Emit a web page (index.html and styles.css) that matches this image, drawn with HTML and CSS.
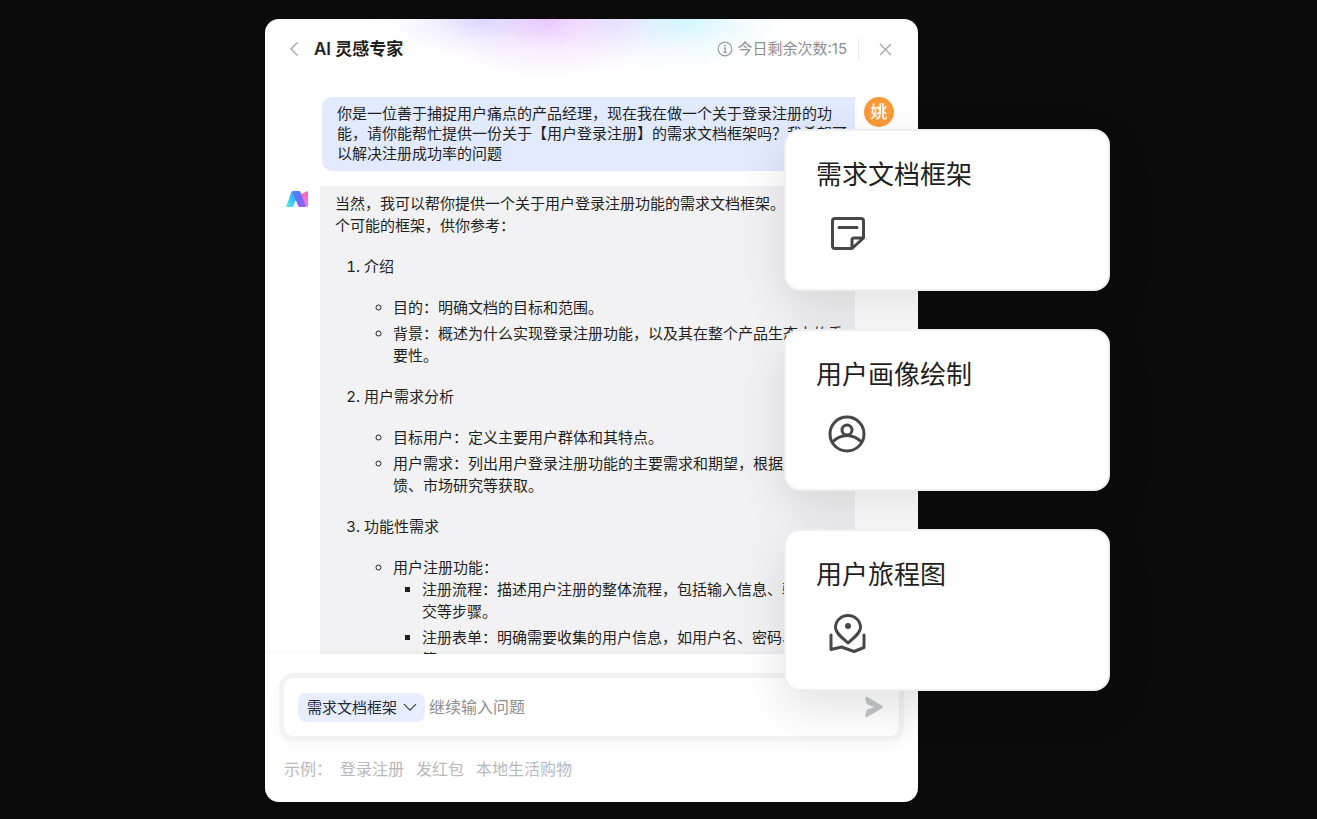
FILE: index.html
```html
<!DOCTYPE html>
<html lang="zh-CN">
	<head>
		<meta charset="utf-8">
		<meta name="viewport" content="width=device-width, initial-scale=1">
		<title>AI 灵感专家</title>
		<link rel="stylesheet" href="styles.css">
	</head>
	<body>
		<!--stage-->
		<div class="stage">
			<!--chat panel-->
			<main class="panel">
				<header class="panel-header">
					<button type="button" class="icon-btn" aria-label="返回">
						<svg width="10" height="16" viewBox="0 0 10 16" fill="none" stroke="#a3a3a8" stroke-width="1.3"><path d="M8.5 1.5L2 8l6.5 6.5"/></svg>
					</button>
					<h1>AI 灵感专家</h1>
					<p class="quota">
						<svg width="16" height="16" viewBox="0 0 16 16" fill="none" stroke="#98989c" stroke-width="1.2"><circle cx="8" cy="8" r="6.8"/><path d="M6.7 7h1.5v4.3M6.4 11.4h3.4"/><circle cx="8" cy="4.7" r=".9" fill="#98989c" stroke="none"/></svg>
						<span>今日剩余次数:15</span>
					</p>
					<button type="button" class="icon-btn close" aria-label="关闭">
						<svg width="13" height="13" viewBox="0 0 13 13" fill="none" stroke="#a3a3a8" stroke-width="1.2"><path d="M1 1l11 11M12 1L1 12"/></svg>
					</button>
				</header>
				<!--messages-->
				<section class="messages">
					<div class="bubble-user">你是一位善于捕捉用户痛点的产品经理，现在我在做一个关于登录注册的功<br>能，请你能帮忙提供一份关于【用户登录注册】的需求文档框架吗？我希望可<br>以解决注册成功率的问题</div>
					<div class="avatar">姚</div>
					<div class="logo">
						<svg width="24" height="18" viewBox="0 0 24 18">
							<defs>
								<linearGradient id="leg" x1="0" y1="1" x2="1" y2="0"><stop offset="0" stop-color="#5ff0e4"/><stop offset=".5" stop-color="#38bdf5"/><stop offset="1" stop-color="#4a83f7"/></linearGradient>
								<linearGradient id="mid" x1="0" y1="0" x2="1" y2="1"><stop offset="0" stop-color="#3f8cf6"/><stop offset=".5" stop-color="#6b6cf2"/><stop offset="1" stop-color="#a65cf0"/></linearGradient>
								<linearGradient id="end" x1="0" y1="0" x2="0" y2="1"><stop offset="0" stop-color="#ff62b2"/><stop offset="1" stop-color="#e27cf5"/></linearGradient>
							</defs>
							<path d="M15.500 3.700L22 1v15.500h-3L14.500 6z" fill="url(#end)"/>
							<path d="M6.500 1h7L7 17H0L5 3q.6-2 1.500-2z" fill="url(#leg)"/>
							<path d="M7.500 1H13q1 0 1.500 1.200L20 17h-6q-1.500 0-2-1.500L7 3z" fill="url(#mid)"/>
						</svg>
					</div>
					<div class="bubble-ai">
						<p>当然，我可以帮你提供一个关于用户登录注册功能的需求文档框架。以下是一<br>个可能的框架，供你参考：</p>
						<ol>
							<li>介绍
								<ul>
									<li>目的：明确文档的目标和范围。</li>
									<li>背景：概述为什么实现登录注册功能，以及其在整个产品生态中的重<br>要性。</li>
								</ul>
							</li>
							<li>用户需求分析
								<ul>
									<li>目标用户：定义主要用户群体和其特点。</li>
									<li>用户需求：列出用户登录注册功能的主要需求和期望，根据用户反<br>馈、市场研究等获取。</li>
								</ul>
							</li>
							<li>功能性需求
								<ul>
									<li>用户注册功能：
										<ul>
											<li>注册流程：描述用户注册的整体流程，包括输入信息、验证、提<br>交等步骤。</li>
											<li>注册表单：明确需要收集的用户信息，如用户名、密码、邮箱<br>等。</li>
										</ul>
									</li>
								</ul>
							</li>
						</ol>
					</div>
				</section>
				<!--/messages-->
				<footer class="panel-footer">
					<form class="ask">
						<div class="picker">
							<select aria-label="模板">
								<option selected>需求文档框架</option>
								<option>用户画像绘制</option>
								<option>用户旅程图</option>
							</select>
							<svg width="14" height="9" viewBox="0 0 14 9" fill="none" stroke="#3c4356" stroke-width="1.2"><path d="M1 1.200l6 6 6-6"/></svg>
						</div>
						<input type="text" placeholder="继续输入问题" aria-label="继续输入问题">
						<button type="submit" class="icon-btn" aria-label="发送">
							<svg width="20" height="22" viewBox="0 0 20 22"><path d="M1.500 1.200Q2.300.500 3.400 1L18 9.800q1.600 1.200 0 2.400L3.400 21q-1.100.500-1.900-.2-.6-.700-.3-1.700L2.600 14.400q.3-.9 1.200-1.200L10.500 11 3.800 8.800Q2.900 8.500 2.600 7.600L1.200 2.900q-.3-1 .3-1.700z" fill="#c5c6ca"/></svg>
						</button>
					</form>
					<nav class="examples">
						<span>示例：</span>
						<a href="#">登录注册</a>
						<a href="#">发红包</a>
						<a href="#">本地生活购物</a>
					</nav>
				</footer>
			</main>
			<!--/chat panel-->
			<!--template cards-->
			<aside class="cards">
				<button type="button" class="card">
					<span>需求文档框架</span>
					<svg width="40" height="40" viewBox="0 0 40 40" fill="none" stroke="#474747" stroke-width="3" stroke-linejoin="round"><path d="M7 4.500h26q2.500 0 2.500 2.500v17L24 34.500H7Q4.500 34.500 4.500 32V7Q4.500 4.500 7 4.500zM24 34.500V26q0-2 2-2h9.500"/><path d="M11 13.500h18" stroke-linecap="round"/></svg>
				</button>
				<button type="button" class="card">
					<span>用户画像绘制</span>
					<svg width="40" height="40" viewBox="0 0 40 40" fill="none" stroke="#474747" stroke-width="3"><circle cx="19" cy="20" r="17"/><circle cx="19" cy="16" r="5"/><path d="M4.500 28Q11 21.500 19 21.500T33.500 28"/></svg>
				</button>
				<button type="button" class="card">
					<span>用户旅程图</span>
					<svg width="40" height="40" viewBox="0 0 40 40" fill="none" stroke="#474747" stroke-width="3" stroke-linejoin="round"><path d="M20 29C14 23.500 7.500 19 7.500 13.500a12.500 12 0 0 1 25 0C32.500 19 26 23.500 20 29z"/><circle cx="20" cy="12" r="3" fill="#474747" stroke="none"/><path d="M3 21V35.500l10.500-2.500L26 37.500l10-4V21" stroke-linecap="round"/></svg>
				</button>
			</aside>
			<!--/template cards-->
		</div>
		<!--/stage-->
	</body>
</html>
```
FILE: styles.css
```css
*{
	box-sizing:border-box;
}
body{
	margin:0;
	background:#0b0b0b;
	color:#1f1f21;
	font-family:Inter, "Noto Sans CJK SC", sans-serif;
	font-size:15px;
}
button, input, select{
	font:inherit;
	border:0;
	background:none;
	padding:0;
	margin:0;
}
button{
	cursor:pointer;
}
svg{
	display:block;
	flex:none;
}
p, h1{
	margin:0;
}
.stage{
	display:flex;
	height:100vh;
	min-height:600px;
	padding:19px 207px 17px 265px;
}
/* chat panel */
.panel{
	flex:1;
	min-width:0;
	display:flex;
	flex-direction:column;
	overflow:hidden;
	border-radius:14px;
	background:
		radial-gradient(90px 36px at 33% 0, rgba(190,190,255,0.5), rgba(190,190,255,0.15) 55%, transparent),
		radial-gradient(100px 60px at 43% 0, rgba(232,175,255,0.6), rgba(240,200,255,0.22) 50%, transparent),
		radial-gradient(80px 40px at 53% 0, rgba(205,195,255,0.35), rgba(205,195,255,0.1) 55%, transparent),
		radial-gradient(110px 54px at 64% 0, rgba(180,245,255,0.6), rgba(190,245,255,0.15) 55%, transparent),
		radial-gradient(210px 62px at 47% 0, rgba(240,225,255,0.5), transparent),
		#fff;
}
.panel-header{
	display:flex;
	align-items:center;
	height:60px;
	padding:0 26px 0 24px;
}
.panel-header h1{
	margin-left:15px;
	font-size:17px;
	line-height:20px;
	font-weight:600;
}
.icon-btn{
	display:flex;
}
.quota{
	display:flex;
	align-items:center;
	gap:4px;
	margin-left:auto;
	line-height:20px;
	color:#8e8e93;
}
.close{
	margin-left:11px;
	padding:4px 0 4px 20px;
	border-left:1px solid #e8e8ea;
}
/* messages */
.messages{
	flex:1;
	min-height:0;
	overflow:hidden;
	display:grid;
	grid-template-columns:34px 1fr 39px;
	grid-template-rows:auto auto;
	row-gap:15px;
	padding:18px 24px 0 21px;
}
.bubble-user{
	grid-column:2;
	margin-left:2px;
	padding:7px 0 7px 15px;
	border-radius:10px 0 10px 10px;
	background:#e2eaff;
	line-height:20px;
}
.avatar{
	width:30px;
	height:30px;
	margin-left:9px;
	border-radius:50%;
	background:#fb9a38;
	color:#fff;
	font-size:17px;
	font-weight:500;
	line-height:30px;
	text-align:center;
}
.logo{
	grid-column:1;
	padding-top:4px;
}
.bubble-ai{
	grid-column:2;
	padding:7px 0 20px 15px;
	background:#f2f2f4;
	line-height:22px;
}
.bubble-ai ol, .bubble-ai ul{
	margin:19px 0;
	padding-left:29px;
}
.bubble-ai li li + li{
	margin-top:4px;
}
.bubble-ai ul ul{
	margin:0;
}
/* footer */
.panel-footer{
	padding:19px 14px 21px;
	box-shadow:0 -2px 6px rgba(0,0,0,0.03);
}
.ask{
	display:flex;
	align-items:center;
	gap:4px;
	height:68px;
	padding:0 15px 0 14px;
	border:5px solid #f3f3f4;
	border-radius:14px;
	box-shadow:0 6px 14px rgba(0,0,0,0.03);
}
.picker{
	display:grid;
	align-items:center;
	justify-items:end;
	border-radius:8px;
	background:#e8eeff;
}
.picker select, .picker svg{
	grid-area:1 / 1;
}
.picker select{
	appearance:none;
	height:29px;
	padding:0 27px 0 9px;
	color:#23293a;
}
.picker svg{
	margin-right:8px;
	pointer-events:none;
}
.ask input{
	flex:1;
	min-width:0;
	font-size:16px;
	outline:none;
}
.ask input::placeholder{
	color:#8e8e90;
	opacity:1;
}
.examples{
	display:flex;
	gap:12px;
	padding:16px 5px 0;
	font-size:16px;
	line-height:24px;
	color:#b8b8bd;
}
.examples a{
	color:inherit;
	text-decoration:none;
}
.examples span{
	margin-right:-4px;
}
/* template cards */
.cards{
	position:relative;
	flex:0 0 326px;
	display:flex;
	flex-direction:column;
	gap:38px;
	margin:110px 0 0 -134px;
}
.card{
	display:flex;
	flex-direction:column;
	align-items:flex-start;
	gap:21px;
	padding:26px 30px 35px;
	border:2px solid #efeff0;
	border-radius:16px;
	background:#fff;
	box-shadow:0 16px 48px rgba(0,0,0,0.12);
	color:#1f1f21;
	font-size:26px;
	line-height:36px;
}
.card svg{
	margin-left:12px;
}
```
